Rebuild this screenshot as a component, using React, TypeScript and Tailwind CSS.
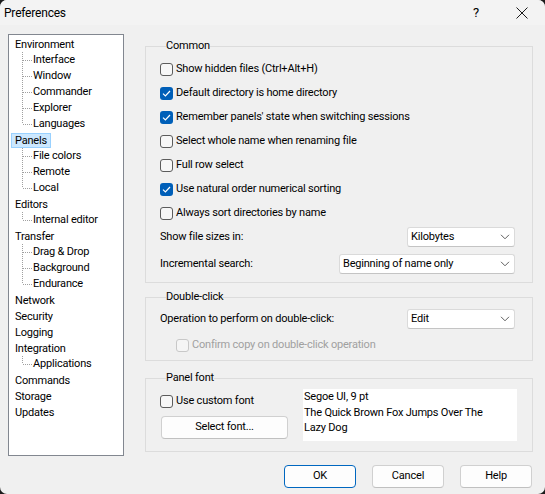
import React from 'react';

type TreeNode = { label: string; children?: string[]; selected?: boolean };

const tree: TreeNode[] = [
  { label: 'Environment', children: ['Interface', 'Window', 'Commander', 'Explorer', 'Languages'] },
  { label: 'Panels', children: ['File colors', 'Remote', 'Local'], selected: true },
  { label: 'Editors', children: ['Internal editor'] },
  { label: 'Transfer', children: ['Drag & Drop', 'Background', 'Endurance'] },
  { label: 'Network' },
  { label: 'Security' },
  { label: 'Logging' },
  { label: 'Integration', children: ['Applications'] },
  { label: 'Commands' },
  { label: 'Storage' },
  { label: 'Updates' },
];

const Connector = ({ last }: { last: boolean }) => (
  <svg width="10" height="16" className="shrink-0">
    <line x1="0.5" y1="0" x2="0.5" y2={last ? 8 : 16} stroke="#a0a0a0" strokeDasharray="1 1" />
    <line x1="1" y1="8.5" x2="10" y2="8.5" stroke="#a0a0a0" strokeDasharray="1 1" />
  </svg>
);

const Tree = () => (
  <div className="w-[116px] h-[422px] shrink-0 bg-white border border-[#828790] pt-[1px] pl-[2px]">
    {tree.map((node) => (
      <div key={node.label}>
        <div className="h-[16px] flex items-center">
          <span
            className={
              node.selected
                ? 'h-[15px] leading-[13px] px-[3px] border border-[#99d1ff] bg-[#cce8ff]'
                : 'h-[15px] leading-[13px] px-[3px] border border-transparent'
            }
          >
            {node.label}
          </span>
        </div>
        {node.children?.map((c, i) => (
          <div key={c} className="h-[16px] flex items-center pl-[11px]">
            <Connector last={i === node.children!.length - 1} />
            <span className="ml-[1px] leading-[16px]">{c}</span>
          </div>
        ))}
      </div>
    ))}
  </div>
);

const CheckBox = ({ checked = false, disabled = false }: { checked?: boolean; disabled?: boolean }) => {
  if (checked) {
    return (
      <span className="w-[13px] h-[13px] shrink-0 rounded-[3px] bg-[#005fb8] flex items-center justify-center">
        <svg width="9" height="9" viewBox="0 0 9 9">
          <path d="M1 4.6 L3.4 7 L8 2" fill="none" stroke="#ffffff" strokeWidth="1.2" />
        </svg>
      </span>
    );
  }
  return (
    <span
      className={
        disabled
          ? 'w-[13px] h-[13px] shrink-0 rounded-[3px] border border-[#c8c8c8] bg-[#f5f5f5]'
          : 'w-[13px] h-[13px] shrink-0 rounded-[3px] border border-[#5c5c5c] bg-[#f7f7f7]'
      }
    />
  );
};

const CheckRow = ({ label, checked, disabled, className = '' }: { label: string; checked?: boolean; disabled?: boolean; className?: string }) => (
  <div className={`h-[24px] flex items-center ${className}`}>
    <CheckBox checked={checked} disabled={disabled} />
    <span className={disabled ? 'ml-[3px] text-[#a0a0a0]' : 'ml-[3px]'}>{label}</span>
  </div>
);

const Chevron = () => (
  <svg width="10" height="6" viewBox="0 0 10 6" className="shrink-0">
    <path d="M1 0.8 L5 4.8 L9 0.8" fill="none" stroke="#5f5f5f" strokeWidth="1" />
  </svg>
);

const Combo = ({ value, className }: { value: string; className: string }) => (
  <div className={`h-[20px] flex items-center justify-between bg-white border border-[#dadada] border-b-[#c4c4c4] rounded-[3px] pl-[3px] pr-[4px] ${className}`}>
    <span>{value}</span>
    <Chevron />
  </div>
);

const Button = ({ label, primary = false, className = '' }: { label: string; primary?: boolean; className?: string }) => (
  <div
    className={
      primary
        ? `h-[23px] flex items-center justify-center rounded-[4px] bg-[#fdfdfd] border border-[#0067c0] ${className}`
        : `h-[23px] flex items-center justify-center rounded-[4px] bg-[#fdfdfd] border border-[#d0d0d0] border-b-[#c0c0c0] ${className}`
    }
  >
    {label}
  </div>
);

const App = () => {
  return (
    <div className="w-[545px] h-[494px] bg-[#1c1c1c] font-['Roboto',sans-serif] text-[11px] tracking-[-0.2px] text-black">
      <div className="w-full h-full rounded-[7px] overflow-hidden bg-[#f0f0f0] flex flex-col">
        {/* title bar */}
        <div className="h-[25px] shrink-0 bg-[#f3f3f3] flex items-center justify-between pl-[4px]">
          <span className="text-[12px]">Preferences</span>
          <div className="flex h-full">
            <div className="w-[46px] h-full flex items-center justify-center text-[13px]">?</div>
            <div className="w-[46px] h-full flex items-center justify-center">
              <svg width="12" height="12" viewBox="0 0 12 12">
                <path d="M0.5 0.5 L11.5 11.5 M11.5 0.5 L0.5 11.5" stroke="#1a1a1a" strokeWidth="1" />
              </svg>
            </div>
          </div>
        </div>

        <div className="flex pl-[8px] pt-[9px]">
          <Tree />

          <div className="ml-[21px] w-[388px] flex flex-col pt-[4px]">
            <fieldset className="border border-[#dcdcdc] pl-[14px] pr-[17px] pb-[6px] pt-[3px]">
              <legend className="ml-[6px] leading-[16px] h-[16px]">Common</legend>
              <CheckRow label="Show hidden files (Ctrl+Alt+H)" />
              <CheckRow label="Default directory is home directory" checked />
              <CheckRow label="Remember panels' state when switching sessions" checked />
              <CheckRow label="Select whole name when renaming file" />
              <CheckRow label="Full row select" />
              <CheckRow label="Use natural order numerical sorting" checked />
              <CheckRow label="Always sort directories by name" />
              <div className="h-[24px] flex items-center justify-between">
                <span>Show file sizes in:</span>
                <Combo value="Kilobytes" className="w-[108px]" />
              </div>
              <div className="h-[24px] mt-[3px] flex items-center justify-between">
                <span>Incremental search:</span>
                <Combo value="Beginning of name only" className="w-[176px]" />
              </div>
            </fieldset>

            <fieldset className="mt-[6px] border border-[#dcdcdc] pl-[14px] pr-[17px] pb-[3px] pt-[2px]">
              <legend className="ml-[6px] leading-[16px] h-[16px]">Double-click</legend>
              <div className="h-[24px] flex items-center justify-between">
                <span>Operation to perform on double-click:</span>
                <Combo value="Edit" className="w-[108px]" />
              </div>
              <CheckRow label="Confirm copy on double-click operation" disabled className="mt-[2px] pl-[16px]" />
            </fieldset>

            <fieldset className="mt-[9px] border border-[#dcdcdc] pl-[14px] pr-[15px] pb-[10px] pt-[3px]">
              <legend className="ml-[6px] leading-[16px] h-[16px]">Panel font</legend>
              <div className="flex">
                <div className="w-[143px] shrink-0 flex flex-col">
                  <CheckRow label="Use custom font" />
                  <Button label="Select font..." className="mt-[3px] ml-[1px] w-[127px]" />
                </div>
                <div className="w-[214px] h-[52px] bg-white pl-[1px] leading-[15.5px]">
                  Segoe UI, 9 pt
                  <br />
                  The Quick Brown Fox Jumps Over The
                  <br />
                  Lazy Dog
                </div>
              </div>
            </fieldset>
          </div>
        </div>

        <div className="mt-[9px] flex justify-end gap-[16px] pr-[13px]">
          <Button label="OK" primary className="w-[72px]" />
          <Button label="Cancel" className="w-[72px]" />
          <Button label="Help" className="w-[72px]" />
        </div>
      </div>
    </div>
  );
};

export default App;
